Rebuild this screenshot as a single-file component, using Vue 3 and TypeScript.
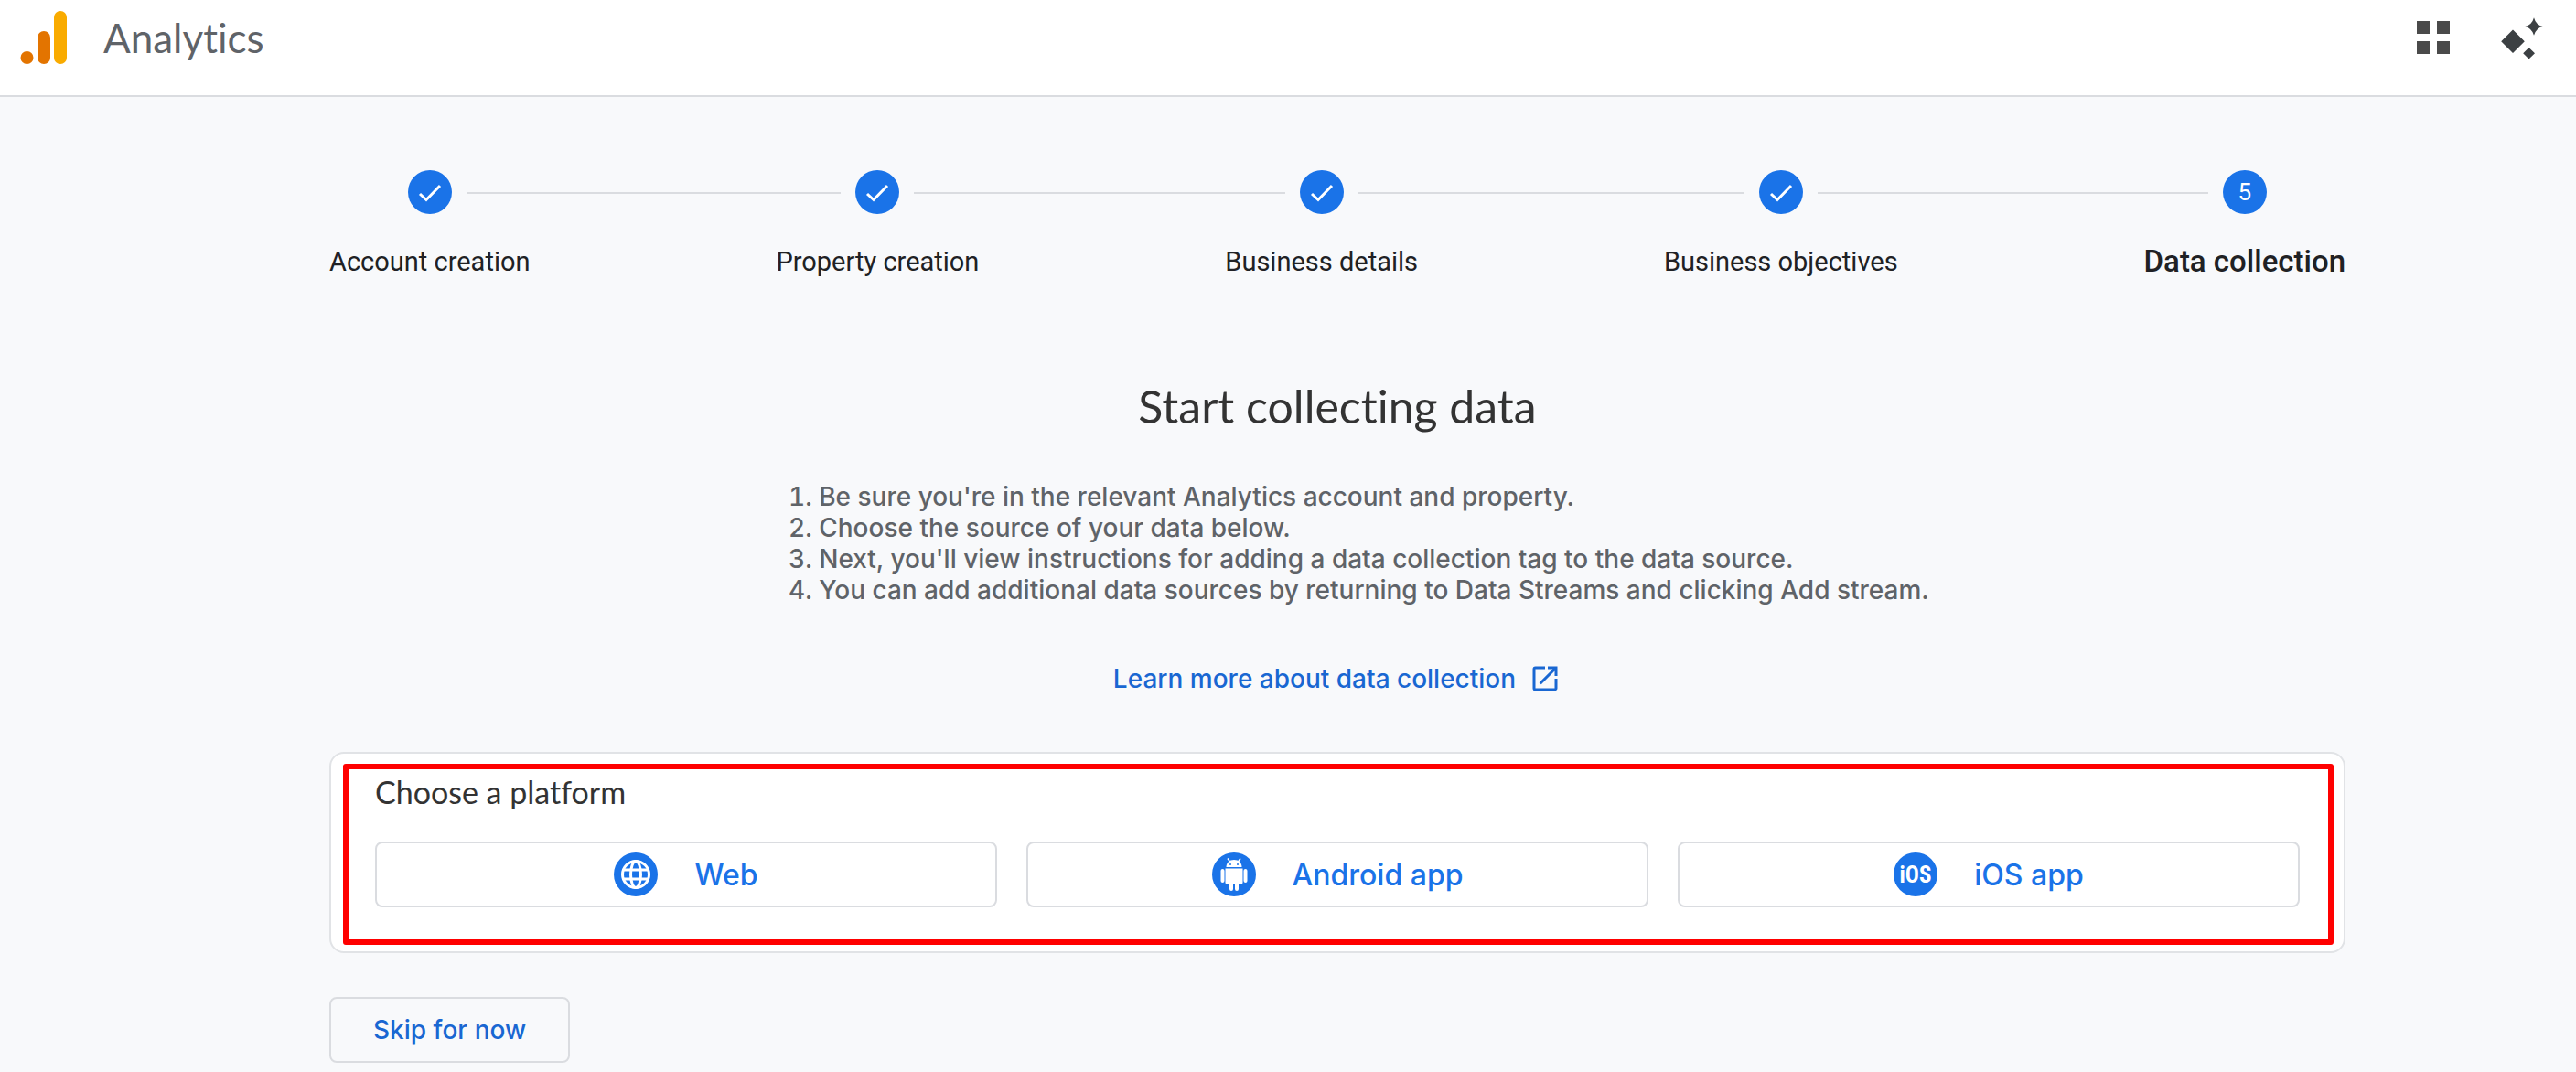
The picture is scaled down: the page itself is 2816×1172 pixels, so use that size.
<script setup lang="ts">
interface Step {
  label: string
  done: boolean
}

interface Platform {
  id: 'web' | 'android' | 'ios'
  label: string
}

const steps: Step[] = [
  { label: 'Account creation', done: true },
  { label: 'Property creation', done: true },
  { label: 'Business details', done: true },
  { label: 'Business objectives', done: true },
  { label: 'Data collection', done: false },
]

const instructions: string[] = [
  "Be sure you're in the relevant Analytics account and property.",
  'Choose the source of your data below.',
  "Next, you'll view instructions for adding a data collection tag to the data source.",
  'You can add additional data sources by returning to Data Streams and clicking Add stream.',
]

const platforms: Platform[] = [
  { id: 'web', label: 'Web' },
  { id: 'android', label: 'Android app' },
  { id: 'ios', label: 'iOS app' },
]
</script>

<template>
  <div class="page">
    <header class="topbar">
      <svg class="logo" viewBox="0 0 52 60" aria-hidden="true">
        <circle cx="7.5" cy="52" r="7" fill="#e37400" />
        <rect x="19" y="23" width="14" height="36" rx="7" fill="#e37400" />
        <rect x="37" y="1" width="14" height="58" rx="7" fill="#f9ab00" />
      </svg>
      <span class="product">Analytics</span>
      <nav class="tools" aria-label="Tools">
        <button type="button" class="tool" aria-label="Apps">
          <svg viewBox="0 0 48 48" fill="#4a4a4a">
            <path d="M6 6h14v14H6zM28 6h14v14H28zM6 28h14v14H6zM28 28h14v14H28z" />
          </svg>
        </button>
        <button type="button" class="tool" aria-label="Assistant">
          <svg viewBox="0 0 48 48" fill="#3c4043">
            <path d="M19 15.5 31.8 28.200 19 41 6.200 28.200zM36.500 35 43 41.300 36.500 47.600 30.200 41.300z" />
            <path d="M42 2.200Q44 10 51.700 12 44 14 42 21.700 40 14 32.300 12 40 10 42 2.200z" />
          </svg>
        </button>
      </nav>
    </header>

    <main class="content">
      <ol class="steps">
        <li v-for="(step, index) in steps" :key="step.label" class="step" :class="{ current: !step.done }">
          <div class="track">
            <span class="line" :class="{ hidden: index === 0 }"></span>
            <span class="badge">
              <svg v-if="step.done" viewBox="0 0 48 48" aria-hidden="true">
                <path d="M13 26 20 32.500 35 17" fill="none" stroke="#fff" stroke-width="3" />
              </svg>
              <template v-else>{{ index + 1 }}</template>
            </span>
            <span class="line" :class="{ hidden: index === steps.length - 1 }"></span>
          </div>
          <span class="tail"></span>
          <span class="label">{{ step.label }}</span>
        </li>
      </ol>

      <h1 class="title">Start collecting data</h1>

      <ol class="instructions">
        <li v-for="text in instructions" :key="text">{{ text }}</li>
      </ol>

      <a class="learn" href="#data-collection">
        Learn more about data collection
        <svg viewBox="0 0 24 24" aria-hidden="true">
          <path
            fill="currentColor"
            d="M19 19H5V5h7V3H5a2 2 0 0 0-2 2v14a2 2 0 0 0 2 2h14c1.100 0 2-.9 2-2v-7h-2v7zM14 3v2h3.590l-9.830 9.830 1.410 1.410L19 6.410V10h2V3h-7z"
          />
        </svg>
      </a>

      <section class="card" aria-labelledby="platform-title">
        <h2 id="platform-title" class="card-title">Choose a platform</h2>
        <div class="platforms">
          <button v-for="platform in platforms" :key="platform.id" type="button" class="platform">
            <svg viewBox="0 0 48 48" aria-hidden="true">
              <circle cx="24" cy="24" r="24" fill="#1a73e8" />
              <g v-if="platform.id === 'web'" fill="none" stroke="#fff" stroke-width="3">
                <circle cx="24" cy="24" r="14.500" />
                <ellipse cx="24" cy="24" rx="5.500" ry="14.500" />
                <path d="M10.500 19h27M10.500 29h27" />
              </g>
              <g v-else-if="platform.id === 'android'" fill="#fff">
                <path d="M15.500 16C15.500 11.500 19 8 24 8s8.500 3.500 8.500 8z" />
                <path d="M17 6.500 19.500 10M31 6.500 28.500 10" stroke="#fff" stroke-width="1.500" />
                <path d="M14.500 17.500h19V33a2 2 0 0 1-2 2h-2.500v5a2 2 0 0 1-4 0v-5h-2v5a2 2 0 0 1-4 0v-5h-2.500a2 2 0 0 1-2-2z" />
                <rect x="9.500" y="18" width="4" height="15" rx="2" />
                <rect x="34.500" y="18" width="4" height="15" rx="2" />
                <g fill="#1a73e8">
                  <circle cx="20" cy="13" r="1" />
                  <circle cx="28" cy="13" r="1" />
                </g>
              </g>
              <text v-else class="ios-mark" x="24" y="33" text-anchor="middle" fill="#fff">iOS</text>
            </svg>
            <span>{{ platform.label }}</span>
          </button>
        </div>
        <div class="highlight" aria-hidden="true"></div>
      </section>

      <button type="button" class="skip">Skip for now</button>
    </main>
  </div>
</template>

<style>
body {
  margin: 0;
  background: #f8f9fb;
}
</style>

<style scoped>
.page {
  box-sizing: border-box;
  min-height: 100vh;
  background: #f8f9fb;
  font-family: Lato, sans-serif;
  font-size: 28px;
  font-variant-ligatures: none;
  color: #333;
}

button {
  font: inherit;
  cursor: pointer;
}

.topbar {
  display: flex;
  align-items: flex-start;
  box-sizing: border-box;
  height: 106px;
  padding: 11px 40px 0 22px;
  background: #fff;
  border-bottom: 2px solid #dadce0;
}

.logo {
  width: 52px;
  height: 60px;
}

.product {
  margin-left: 39px;
  font-size: 44px;
  line-height: 60px;
  color: #5f6368;
}

.tools {
  display: flex;
  gap: 44px;
  margin: 6px 0 0 auto;
}

.tool {
  width: 48px;
  height: 48px;
  padding: 0;
  border: 0;
  background: none;
}

.tool svg {
  display: block;
  width: 48px;
  height: 48px;
  overflow: visible;
}

.content {
  display: flex;
  flex-direction: column;
  align-items: center;
  padding: 80px 252px 10px 360px;
}

.steps {
  display: flex;
  align-self: stretch;
  margin: 0;
  padding: 0;
  list-style: none;
  font-family: Roboto, sans-serif;
  font-size: 29px;
  color: #202124;
}

.step {
  display: grid;
  grid-template-columns: auto 1fr;
  flex: 1 1 auto;
  row-gap: 32px;
  align-items: center;
}

.step:last-child {
  flex: none;
}

.track {
  display: flex;
  align-items: center;
  gap: 16px;
}

.line {
  flex: 1;
}

.line,
.tail {
  height: 2px;
  background: #dadce0;
  position: relative;
  top: 1px;
}

.line.hidden {
  visibility: hidden;
}

.badge {
  display: flex;
  align-items: center;
  justify-content: center;
  width: 48px;
  height: 48px;
  border-radius: 50%;
  background: #1a73e8;
  font-size: 26px;
  color: #fff;
}

.badge svg {
  width: 48px;
  height: 48px;
}

.label {
  line-height: 40px;
  white-space: nowrap;
}

.current .label {
  font-size: 33px;
  font-weight: 500;
}

.title {
  margin: 108px 0 0;
  font-size: 50px;
  font-weight: 400;
  line-height: 60px;
}

.instructions {
  margin: 52px 0 0;
  padding-left: 80px;
  font-family: Inter, sans-serif;
  line-height: 34px;
  font-weight: 500;
  color: #5f6368;
}

.learn {
  display: flex;
  align-items: center;
  gap: 14px;
  margin-top: 62px;
  font-family: Inter, sans-serif;
  font-weight: 500;
  line-height: 36px;
  color: #1967d2;
  text-decoration: none;
}

.learn svg {
  width: 36px;
  height: 36px;
}

.card {
  position: relative;
  align-self: stretch;
  margin-top: 62px;
  padding: 22px 48px 48px;
  background: #fff;
  border: 2px solid #e1e3e6;
  border-radius: 16px;
}

.card-title {
  margin: 0 0 34px;
  font-size: 34px;
  font-weight: 400;
  line-height: 40px;
}

.platforms {
  display: grid;
  grid-template-columns: repeat(3, 1fr);
  gap: 32px;
}

.platform {
  display: flex;
  align-items: center;
  justify-content: center;
  gap: 40px;
  height: 72px;
  padding: 0;
  background: #fff;
  border: 2px solid #dadce0;
  border-radius: 8px;
  font-family: Inter, sans-serif;
  font-size: 32px;
  font-weight: 500;
  color: #1a73e8;
}

.platform svg {
  width: 48px;
  height: 48px;
}

.ios-mark {
  font-family: 'Liberation Sans Narrow', 'Roboto Condensed', Roboto, sans-serif;
  font-size: 25px;
  font-weight: 700;
}

.highlight {
  position: absolute;
  inset: 11px 11px 7px 13px;
  border: 6px solid #f00;
  border-radius: 3px;
  pointer-events: none;
}

.skip {
  align-self: flex-start;
  height: 72px;
  margin-top: 48px;
  padding: 0 46px;
  background: none;
  border: 2px solid #dadce0;
  border-radius: 8px;
  font-family: Inter, sans-serif;
  font-weight: 500;
  color: #1967d2;
}
</style>
